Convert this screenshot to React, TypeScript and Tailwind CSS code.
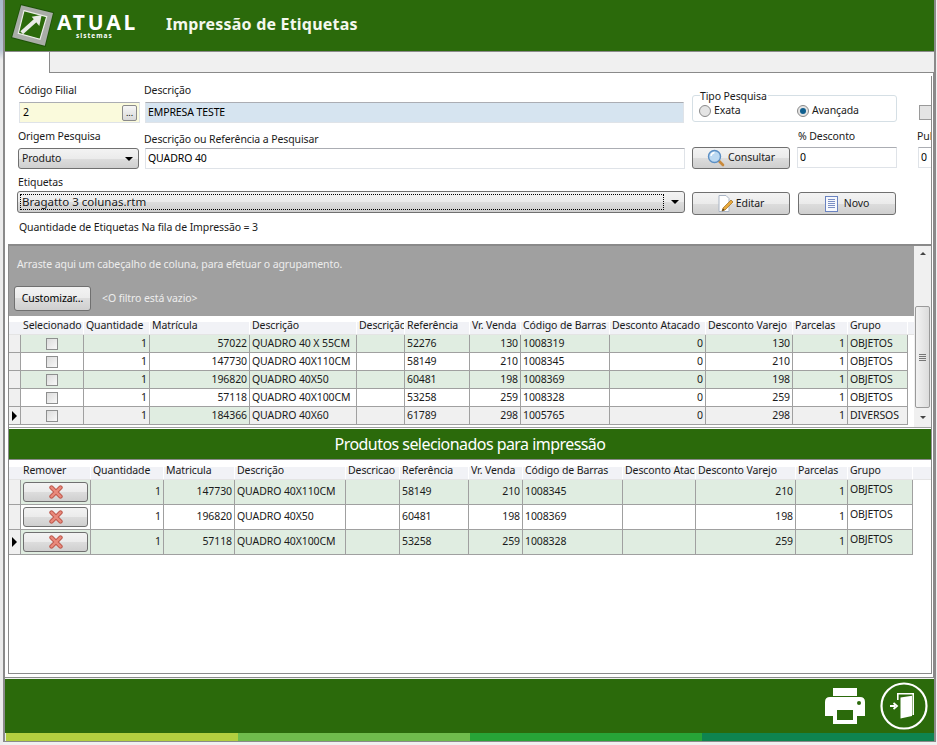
import React from "react";

const FONT = "[font-family:'DejaVu_Sans',sans-serif] text-[10.5px] tracking-[-0.1px]";
const BTN = "border border-[#707070] rounded-[3px] bg-[linear-gradient(#f3f3f3_0%,#ebebeb_50%,#dddddd_50%,#cfcfcf_100%)] flex items-center justify-center shrink-0";
const INPUT = "h-[21px] border border-[#dfe3e8] border-t-[#abadb3] flex items-center px-[2px] shrink-0 text-black";

const G1 = "grid grid-cols-[12px_63px_66px_100px_107px_48px_65px_51px_89px_96px_87px_55px_60px]";
const G2 = "grid grid-cols-[12px_70px_73px_71px_111px_54px_69px_54px_100px_73px_100px_52px_65px]";
const CELL = "border-r border-b border-[#a0a0a0] flex items-center px-[2px] overflow-hidden whitespace-nowrap";

const rows1 = [
  ["1", "57022", "QUADRO 40 X 55CM", "", "52276", "130", "1008319", "0", "130", "1", "OBJETOS"],
  ["1", "147730", "QUADRO 40X110CM", "", "58149", "210", "1008345", "0", "210", "1", "OBJETOS"],
  ["1", "196820", "QUADRO 40X50", "", "60481", "198", "1008369", "0", "198", "1", "OBJETOS"],
  ["1", "57118", "QUADRO 40X100CM", "", "53258", "259", "1008328", "0", "259", "1", "OBJETOS"],
  ["1", "184366", "QUADRO 40X60", "", "61789", "298", "1005765", "0", "298", "1", "DIVERSOS"],
];
const right1 = [true, true, false, false, false, true, false, true, true, true, false];
const head1 = ["Selecionado", "Quantidade", "Matrícula", "Descrição", "Descrição", "Referência", "Vr. Venda", "Código de Barras", "Desconto Atacado", "Desconto Varejo", "Parcelas", "Grupo"];

const rows2 = [
  ["1", "147730", "QUADRO 40X110CM", "", "58149", "210", "1008345", "", "210", "1", "OBJETOS"],
  ["1", "196820", "QUADRO 40X50", "", "60481", "198", "1008369", "", "198", "1", "OBJETOS"],
  ["1", "57118", "QUADRO 40X100CM", "", "53258", "259", "1008328", "", "259", "1", "OBJETOS"],
];
const head2 = ["Remover", "Quantidade", "Matricula", "Descrição", "Descricao", "Referência", "Vr. Venda", "Código de Barras", "Desconto Atacado", "Desconto Varejo", "Parcelas", "Grupo"];

function Arrow() {
  return <span className="w-0 h-0 border-y-[5px] border-y-transparent border-l-[5px] border-l-black" />;
}

function Caret() {
  return <span className="w-0 h-0 border-x-[4px] border-x-transparent border-t-[4px] border-t-black" />;
}

function Logo() {
  return (
    <svg width="46" height="46" viewBox="0 0 46 46" className="shrink-0">
      <polygon points="10.7,1 44,9.2 35.5,44 1,35" fill="#1d5208" />
      <polygon points="11.2,2.2 43,10 34.8,42.8 2.2,34.3" fill="#a9ada7" />
      <polygon points="14,7.7 36.7,13.7 30,36.3 8.3,30.3" fill="#2b6a0b" stroke="#eceee9" strokeWidth="1.2" />
      <path d="M11.7 29.7 L27 16" stroke="#e9ebe7" strokeWidth="4" />
      <polygon points="21.7,13.7 31.7,12 29.3,23" fill="#e9ebe7" />
    </svg>
  );
}

function SearchIcon() {
  return (
    <svg width="18" height="18" viewBox="0 0 18 18">
      <path d="M11.5 11.5 L16 16" stroke="#c98a3c" strokeWidth="2.6" strokeLinecap="round" />
      <circle cx="7.5" cy="7.5" r="6" fill="#bcd9f2" stroke="#5c8fc4" strokeWidth="1.4" />
      <path d="M4 7 A4 4 0 0 1 7.5 3.5" stroke="#ffffff" strokeWidth="1.4" fill="none" />
    </svg>
  );
}

function EditIcon() {
  return (
    <svg width="16" height="18" viewBox="0 0 16 18">
      <path d="M1 .5 H8 L11 3.5 V16.5 H1 Z" fill="#ffffff" stroke="#a9b4c4" />
      <path d="M4 16 L5 13 L13 5 L15 7 L7 15 Z" fill="#e8a93c" stroke="#9c6a1c" strokeWidth=".7" />
      <path d="M4 16 L5 13.4 L6.6 15 Z" fill="#4a3a20" />
    </svg>
  );
}

function NewIcon() {
  return (
    <svg width="13" height="16" viewBox="0 0 13 16">
      <rect x=".5" y=".5" width="12" height="15" fill="#f6f8fd" stroke="#6a83c0" />
      <path d="M3 3.5 H10 M3 5.5 H10 M3 7.5 H10 M3 9.5 H10 M3 11.5 H10" stroke="#7b8fc4" strokeWidth="1" />
    </svg>
  );
}

function RedX() {
  return (
    <svg width="14" height="14" viewBox="0 0 14 14">
      <path d="M2.5 2.5 L11.5 11.5 M11.5 2.5 L2.5 11.5" stroke="#bf5a4e" strokeWidth="4.4" strokeLinecap="round" />
      <path d="M2.5 2.5 L11.5 11.5 M11.5 2.5 L2.5 11.5" stroke="#ea8a7c" strokeWidth="2.4" strokeLinecap="round" />
    </svg>
  );
}

function Printer() {
  return (
    <svg width="40" height="36" viewBox="0 0 40 36" className="shrink-0">
      <rect x="8" y="0" width="24" height="8" fill="#fff" />
      <path d="M5 9 H35 Q40 9 40 14 V28 H32 V22 H8 V28 H0 V14 Q0 9 5 9 Z" fill="#fff" />
      <path d="M8 22 H12 V32 H28 V22 H32 V36 H8 Z" fill="#fff" />
      <circle cx="34" cy="15" r="2" fill="#2b6a0b" />
    </svg>
  );
}

function DoorIcon() {
  return (
    <svg width="48" height="48" viewBox="0 0 48 48" className="shrink-0">
      <circle cx="24" cy="24" r="22.5" fill="none" stroke="#fff" strokeWidth="2.2" />
      <path d="M17 18 V11 H34 V33 H32.5 V12.6 H18.6 V18 Z" fill="#fff" />
      <path d="M20.5 15.5 L32 13.8 V34 L20.5 36.5 Z" fill="#fff" />
      <path d="M10 24 H15 M13.5 21 L17 24 L13.5 27" stroke="#fff" strokeWidth="1.8" fill="none" />
    </svg>
  );
}

function Check() {
  return <span className="w-[12px] h-[12px] border border-[#8e8f8f] bg-[linear-gradient(135deg,#dcdcdc,#f8f8f8)] block" />;
}

function Radio({ on }: { on: boolean }) {
  return (
    <span className="w-[12px] h-[12px] rounded-full border border-[#8a8a8a] bg-[#e4e4e4] flex items-center justify-center shrink-0">
      {on && <span className="w-[6px] h-[6px] rounded-full bg-[#0f5f8f]" />}
    </span>
  );
}

function Head({ items, cols }: { items: string[]; cols: string }) {
  return (
    <div className={`${cols} h-[19px] bg-[linear-gradient(#ffffff_0%,#ffffff_35%,#f1f2f6_35%,#f1f2f6_100%)] border-b border-[#e4e4e4]`}>
      <div />
      {items.map((h, i) => (
        <div key={i} className="border-r border-white pl-[2px] pt-[2px] flex items-center overflow-hidden whitespace-nowrap text-[#1a1a1a]">{h}</div>
      ))}
    </div>
  );
}

function Grid1() {
  return (
    <div className="flex flex-1 min-w-0 flex-col">
      <div className="h-[70px] bg-[#a0a0a0] text-[#ededed] flex flex-col">
        <div className="pl-[8px] pt-[11px] h-[40px]">Arraste aqui um cabeçalho de coluna, para efetuar o agrupamento.</div>
        <div className="flex items-center pl-[5px] h-[25px]">
          <div className={`${BTN} w-[77px] h-[25px] text-black pt-[1px]`}>Customizar...</div>
          <span className="ml-[11px] pt-[1px]">{"<O filtro está vazio>"}</span>
        </div>
      </div>
      <Head items={head1} cols={G1} />
      {rows1.map((r, i) => {
        const last = i === 4;
        const bg = last ? "bg-[#f0f0f0]" : i % 2 === 0 ? "bg-[#e0ede1]" : "bg-white";
        return (
          <div key={i} className={`${G1} h-[18px]`}>
            <div className="bg-[#f0f0f0] border-r border-b border-[#a0a0a0] flex items-center justify-center">{last && <Arrow />}</div>
            <div className={`${bg} ${CELL} justify-center`}><Check /></div>
            {r.map((c, j) => (
              <div key={j} className={`${last && j === 1 ? "bg-[#e0ede1]" : bg} ${CELL} ${right1[j] ? "justify-end" : ""}`}>{c}</div>
            ))}
          </div>
        );
      })}
    </div>
  );
}

function Scrollbar() {
  return (
    <div className="w-[17px] shrink-0 bg-[#f0f0f0] flex flex-col items-center">
      <div className="h-[60px] w-full flex justify-center pt-[6px]">
        <span className="w-0 h-0 border-x-[3px] border-x-transparent border-b-[3px] border-b-[#444]" />
      </div>
      <div className="h-[102px] w-[15px] border border-[#9a9a9a] rounded-[2px] bg-[linear-gradient(90deg,#f2f2f2,#dcdcdc)] flex flex-col items-center justify-center gap-[1px]">
        <span className="w-[7px] h-[1px] bg-[#777]" />
        <span className="w-[7px] h-[1px] bg-[#777]" />
        <span className="w-[7px] h-[1px] bg-[#777]" />
        <span className="w-[7px] h-[1px] bg-[#777]" />
      </div>
      <div className="flex-1 w-full flex justify-center items-center">
        <span className="w-0 h-0 border-x-[3px] border-x-transparent border-t-[3px] border-t-[#444]" />
      </div>
    </div>
  );
}

function Grid2() {
  return (
    <div className="flex-1 min-h-0 bg-white pt-[1px]">
      <Head items={head2} cols={G2} />
      {rows2.map((r, i) => {
        const bg = i % 2 === 0 ? "bg-[#e0ede1]" : "bg-white";
        return (
          <div key={i} className={`${G2} h-[25px]`}>
            <div className="bg-[#f0f0f0] border-r border-b border-[#a0a0a0] flex items-center justify-center">{i === 2 && <Arrow />}</div>
            <div className={`${bg} border-r border-b border-[#a0a0a0] flex items-center justify-center`}>
              <div className={`${BTN} w-[65px] h-[20px]`}><RedX /></div>
            </div>
            {r.map((c, j) => (
              <div key={j} className={`${bg} ${CELL} ${right1[j] ? "justify-end" : ""} ${j === 10 ? "items-start pt-[2px]" : ""}`}>{c}</div>
            ))}
          </div>
        );
      })}
    </div>
  );
}

function Form() {
  return (
    <div className="h-[168px] border-r border-[#8a8a8a] pl-[13px] overflow-hidden shrink-0">
      {/* row 1 */}
      <div className="flex h-[47px] pt-[7px] items-start">
        <div className="w-[126px] shrink-0">
          <div className="h-[19px]">Código Filial</div>
          <div className={`${INPUT} w-[121px] ml-[1px] bg-[#fafadc] justify-between`}>
            <span className="pl-[1px]">2</span>
            <span className="w-[15px] h-[16px] border border-[#8a8a8a] rounded-[2px] bg-[linear-gradient(#f6f6f6,#d9d9d9)] flex items-center justify-center text-[9px] leading-none">...</span>
          </div>
        </div>
        <div className="w-[548px] shrink-0">
          <div className="h-[19px]">Descrição</div>
          <div className={`${INPUT} ml-[1px] w-[539px] bg-[#d6e4f0]`}>EMPRESA TESTE</div>
        </div>
        <div className="relative w-[205px] h-[27px] mt-[12px] border border-[#d5dfe5] rounded-[3px] shrink-0 flex items-center pl-[6px] pt-[5px]">
          <span className="absolute left-[7px] top-[-5px] bg-white pr-[1px] leading-none">Tipo Pesquisa</span>
          <Radio on={false} />
          <span className="ml-[3px] w-[83px]">Exata</span>
          <Radio on />
          <span className="ml-[3px]">Avançada</span>
        </div>
        <div className="ml-[22px] mt-[22px] w-[14px] h-[15px] border border-[#9a9a9a] bg-[#e4e4e4] shrink-0" />
      </div>
      {/* row 2 */}
      <div className="flex h-[52px] pt-[7px] items-start">
        <div className="w-[126px] shrink-0">
          <div className="h-[12px] leading-[12px]">Origem Pesquisa</div>
          <div className={`${BTN} w-[121px] h-[21px] mt-[6px] justify-between! px-[3px] pt-[1px]`}>
            <span>Produto</span>
            <span className="mr-[2px] flex"><Caret /></span>
          </div>
        </div>
        <div className="w-[548px] shrink-0">
          <div className="h-[18px] pt-[3px] leading-[12px]">Descrição ou Referência a Pesquisar</div>
          <div className={`${INPUT} ml-[1px] w-[540px] bg-white`}>QUADRO 40</div>
        </div>
        <div className={`${BTN} w-[98px] h-[22px] mt-[17px] gap-[3px]`}>
          <SearchIcon />
          <span>Consultar</span>
        </div>
        <div className="w-[100px] ml-[7px] shrink-0">
          <div className="h-[17px] pl-[1px] leading-[12px]">% Desconto</div>
          <div className={`${INPUT} w-[100px] bg-white`}>0</div>
        </div>
        <div className="ml-[20px] w-[40px] shrink-0">
          <div className="h-[17px] leading-[12px]">Pulo</div>
          <div className={`${INPUT} w-[40px] ml-[1px] bg-white`}>0</div>
        </div>
      </div>
      {/* row 3 */}
      <div className="flex items-start h-[46px]">
        <div className="w-[674px] shrink-0">
          <div className="h-[16px] leading-[12px] pt-[1px]">Etiquetas</div>
          <div className={`${BTN} w-[668px] -ml-[1px] h-[22px] justify-between! pl-[2px] pr-[5px]`}>
            <span className="flex-1 h-[16px] mr-[7px] border border-dotted border-black flex items-center pl-[1px] text-[11.5px] tracking-normal">Bragatto 3 colunas.rtm</span>
            <Caret />
          </div>
        </div>
        <div className={`${BTN} w-[98px] h-[23px] mt-[17px] gap-[2px]`}>
          <EditIcon />
          <span>Editar</span>
        </div>
        <div className={`${BTN} w-[98px] h-[23px] mt-[17px] ml-[8px] gap-[6px]`}>
          <NewIcon />
          <span>Novo</span>
        </div>
      </div>
      <div className="pl-[1px] leading-[12px]">Quantidade de Etiquetas Na fila de Impressão = 3</div>
    </div>
  );
}

export default function App() {
  return (
    <div className={`${FONT} w-[937px] h-[745px] bg-[#f0f0f0] overflow-hidden flex text-[#1a1a1a]`}>
      <div className="w-[3px] shrink-0 bg-[linear-gradient(#a9b9cb_0,#b8c4d2_50px,#ececec_60px)]" />
      <div className="w-[933px] h-[742px] shrink-0 border-x-2 border-b border-[#8a8a8a] flex flex-col">
        {/* header */}
        <div className="h-[52px] shrink-0 bg-[#2b6a0b] border-b border-[#8a8a8a] flex items-center pl-[5px]">
          <Logo />
          <div className="w-[110px] shrink-0 ml-[1px] flex flex-col items-start text-white font-bold">
            <span className="text-[21px] leading-[19px] tracking-[2.8px]">ATUAL</span>
            <span className="ml-[19px] text-[6.5px] leading-[7px] tracking-[1px]">sistemas</span>
          </div>
          <span className="[font-family:'DejaVu_Serif',serif] font-bold text-[16px] tracking-[0.2px] mb-[3px] -ml-[1px] text-[#f4f8ee]">Impressão de Etiquetas</span>
        </div>
        {/* tab strip */}
        <div className="h-[21px] shrink-0 bg-[#f0f0f0] border-b border-[#8a8a8a] flex">
          <div className="w-[45px] h-[21px] bg-white border-r border-[#8a8a8a]" />
        </div>
        {/* panel */}
        <div className="h-[605px] shrink-0 bg-white border-r border-b border-[#8a8a8a] pr-[1px] pt-[3px] flex flex-col">
          <Form />
          <div className="flex-1 min-h-0 ml-[3px] mb-[3px] border-t-2 border-l border-b border-r border-[#8a8a8a] flex flex-col">
            <div className="flex h-[182px] shrink-0 border-b border-[#a0a0a0]">
              <Grid1 />
              <Scrollbar />
            </div>
            <div className="h-[31px] mt-[1px] shrink-0 bg-[#2b6a0b] border-b border-[#8a8a8a] flex items-center justify-center text-white text-[16px] tracking-[-0.55px]">
              Produtos selecionados para impressão
            </div>
            <Grid2 />
          </div>
        </div>
        {/* footer */}
        <div className="flex-1 min-h-0 bg-[#2b6a0b] mt-[1px] flex flex-col">
          <div className="flex-1 flex items-center justify-end pr-[6px] gap-[15px]">
            <Printer />
            <DoorIcon />
          </div>
          <div className="h-[8px] shrink-0 flex pl-[1px] bg-[#e6efe0]">
            <div className="flex-1 bg-[#b2cf3f]" />
            <div className="flex-1 bg-[#6fbc4c]" />
            <div className="flex-1 bg-[#27a437]" />
            <div className="flex-1 bg-[#0e8450]" />
          </div>
        </div>
      </div>
    </div>
  );
}
